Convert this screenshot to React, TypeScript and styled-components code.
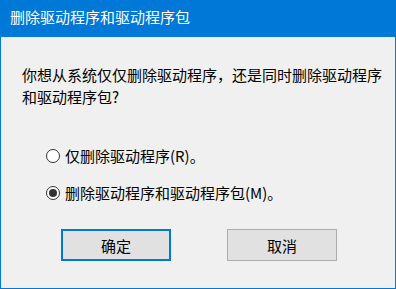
import React, { useState } from "react";
import styled, { createGlobalStyle } from "styled-components";

const GlobalStyle = createGlobalStyle`
  html, body {
    margin: 0;
    padding: 0;
    background: #f0f0f0;
  }
  body {
    font-family: "Noto Sans CJK SC", "Noto Sans", sans-serif;
  }
`;

const App = () => {
  const [choice, setChoice] = useState<"driver" | "package">("package");

  return (
    <>
      <GlobalStyle />
      <Window>
        <TitleBar>
          <Title>删除驱动程序和驱动程序包</Title>
        </TitleBar>
        <Content>
          <Message>你想从系统仅仅删除驱动程序，还是同时删除驱动程序和驱动程序包?</Message>
          <Options>
            <Option onClick={() => setChoice("driver")}>
              <Radio checked={choice === "driver"} />
              <OptionLabel>仅删除驱动程序(R)。</OptionLabel>
            </Option>
            <Option onClick={() => setChoice("package")}>
              <Radio checked={choice === "package"} />
              <OptionLabel>删除驱动程序和驱动程序包(M)。</OptionLabel>
            </Option>
          </Options>
          <ButtonRow>
            <Button primary>确定</Button>
            <Button>取消</Button>
          </ButtonRow>
        </Content>
      </Window>
    </>
  );
};

export default App;

const Window = styled.div`
  width: 396px;
  height: 289px;
  box-sizing: border-box;
  border: 1px solid #0078d7;
  border-top: none;
  display: flex;
  flex-direction: column;
  background: #f0f0f0;
`;

const TitleBar = styled.div`
  height: 37px;
  margin: 0 -1px;
  background: #0078d7;
  display: flex;
  align-items: center;
  padding-left: 10px;
`;

const Title = styled.span`
  color: #ffffff;
  font-size: 15px;
  line-height: 20px;
  margin-top: -3px;
`;

const Content = styled.div`
  flex: 1;
  padding: 27px 12px 0 21px;
  display: flex;
  flex-direction: column;
`;

const Message = styled.p`
  margin: 0;
  font-size: 15px;
  line-height: 22px;
  color: #000;
  word-break: break-all;
`;

const Options = styled.div`
  display: flex;
  flex-direction: column;
  gap: 17px;
  margin-top: 38px;
  padding-left: 24px;
`;

const Option = styled.label`
  display: flex;
  align-items: center;
  height: 20px;
  gap: 5px;
  cursor: default;
`;

const Radio = styled.span<{ checked?: boolean }>`
  width: 14px;
  height: 14px;
  box-sizing: border-box;
  border: 1px solid #333;
  border-radius: 50%;
  background: #fff;
  position: relative;
  flex-shrink: 0;
  &::after {
    content: "";
    display: ${(p) => (p.checked ? "block" : "none")};
    position: absolute;
    left: 2px;
    top: 2px;
    width: 8px;
    height: 8px;
    border-radius: 50%;
    background: #333;
  }
`;

const OptionLabel = styled.span`
  font-size: 15px;
  color: #000;
  line-height: 20px;
`;

const ButtonRow = styled.div`
  display: flex;
  gap: 56px;
  margin-top: 26px;
  padding-left: 39px;
`;

const Button = styled.button<{ primary?: boolean }>`
  width: 110px;
  height: 32px;
  box-sizing: border-box;
  background: #e1e1e1;
  border: ${(p) => (p.primary ? "2px solid #0078d7" : "1px solid #adadad")};
  font-family: "Noto Sans CJK SC", "Noto Sans", sans-serif;
  font-size: 15px;
  color: #000;
  padding: 0;
  outline: none;
`;
